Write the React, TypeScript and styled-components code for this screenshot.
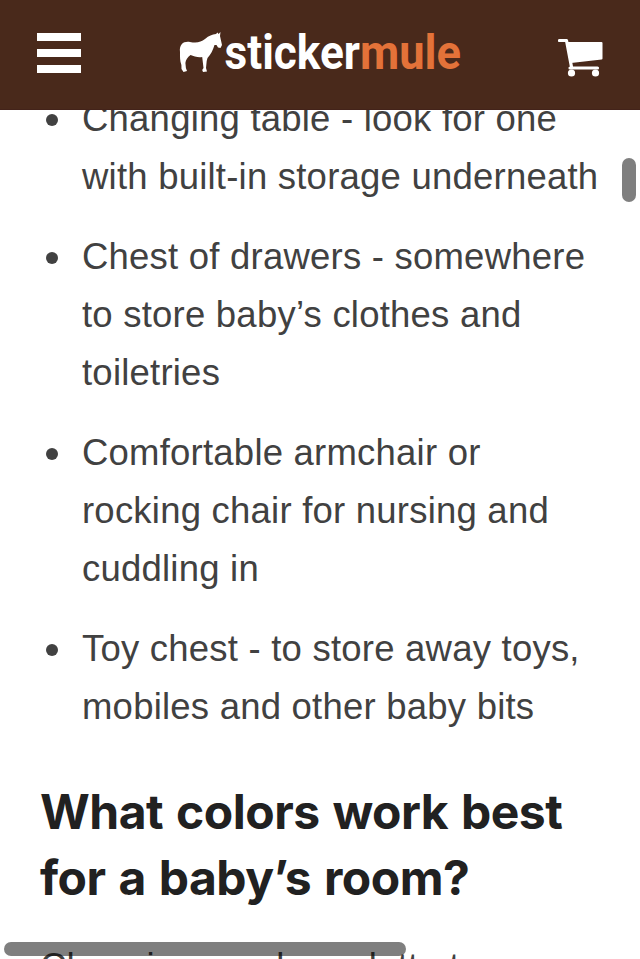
import React from "react";
import styled, { createGlobalStyle } from "styled-components";

const GlobalStyle = createGlobalStyle`
  html, body { margin: 0; height: 100%; overflow: hidden; background: #fff; }
`;

const Screen = styled.div`
  position: relative;
  display: flex;
  flex-direction: column;
  width: 640px;
  height: 959px;
  overflow: hidden;
  background: #fff;
`;

const Header = styled.header`
  display: flex;
  flex: none;
  align-items: center;
  justify-content: space-between;
  box-sizing: border-box;
  height: 110px;
  padding: 0 36px 0 37px;
  background: #49291b;
  box-shadow: inset 0 -1px #43231a;
`;

const MenuButton = styled.button`
  display: flex;
  flex-direction: column;
  justify-content: space-between;
  width: 44px;
  height: 40px;
  margin-bottom: 4px;
  padding: 0;
  border: 0;
  background: none;
`;

const MenuBar = styled.span`
  height: 8px;
  background: #fff;
`;

const Logo = styled.svg`
  width: 284px;
  height: 50px;
  margin: 0 0 4px;
  overflow: visible;
`;

const Wordmark = styled.text<{ $color: string }>`
  font: 700 48px Roboto, sans-serif;
  fill: ${(p) => p.$color};
`;

const CartIcon = styled.svg`
  width: 46px;
  height: 40px;
  margin-top: 5px;
`;

const Article = styled.main`
  flex: 1;
  min-height: 0;
  overflow: hidden;
  padding: 0 20px 0 40px;
  color: #414141;
  font: 36.5px/58px "Liberation Sans", Arial, sans-serif;
  letter-spacing: 0.22px;
`;

const List = styled.ul`
  display: flex;
  flex-direction: column;
  gap: 22px;
  margin: -20px 0 0;
  padding: 0;
  list-style: none;
`;

const Item = styled.li`
  display: flex;
`;

const Bullet = styled.span`
  flex: none;
  width: 12px;
  height: 12px;
  margin: 24px 24px 0 6px;
  border-radius: 50%;
  background: #414141;
`;

const Line = styled.span`
  display: block;
  white-space: nowrap;
`;

const Heading = styled.h2`
  margin: 43px 0 0;
  color: #212121;
  font: 700 48px/66px Inter, sans-serif;
  letter-spacing: -0.5px;
  word-spacing: 2px;
`;

const Paragraph = styled.p`
  margin: 27px 0 0;
  white-space: nowrap;
`;

const Scrollbar = styled.div<{ $axis: "x" | "y" }>`
  position: absolute;
  border-radius: 7px;
  background: rgba(0, 0, 0, 0.5);
  ${(p) =>
    p.$axis === "x"
      ? "left: 4px; bottom: 3px; width: 402px; height: 14px;"
      : "right: 4px; top: 158px; width: 14px; height: 44px;"}
`;

const items = [
  ["Changing table - look for one", "with built-in storage underneath"],
  ["Chest of drawers - somewhere", "to store baby’s clothes and", "toiletries"],
  ["Comfortable armchair or", "rocking chair for nursing and", "cuddling in"],
  ["Toy chest - to store away toys,", "mobiles and other baby bits"],
];

export default function App() {
  return (
    <>
      <GlobalStyle />
      <Screen>
        <Header>
          <MenuButton aria-label="Menu">
            <MenuBar />
            <MenuBar />
            <MenuBar />
          </MenuButton>
          <Logo viewBox="178 28 284 50" aria-label="stickermule">
            <path
              fill="#fff"
              d="M180 52C179 44 184 41 190 42C197 43.500 201 42 205 39C209 35.500 212 34.500 216 34L217.500 32.500L218.500 34L220.500 32L220 36L222 45L220.500 48L218 47.500L216.500 45L214.500 45C213 50 211 54 207.500 58L206.700 61L206 68L207 71.500L203 72L202.200 70L203.500 68L202.200 57C198 58 194 56 190.500 55C187.500 57 185.700 60 185.400 63L185.900 68L187 71L183.500 72L181.500 69L181.400 65C179.800 61 180 56 180 52Z"
            />
            <Wordmark $color="#fff" x="224.500" y="68.500" textLength="135.500" lengthAdjust="spacingAndGlyphs">sticker</Wordmark>
            <Wordmark $color="#e37239" x="360" y="68.500" textLength="101" lengthAdjust="spacingAndGlyphs">mule</Wordmark>
          </Logo>
          <CartIcon viewBox="558 38 46 40" aria-label="Cart">
            <path
              fill="none"
              stroke="#fff"
              strokeWidth="3.2"
              strokeLinecap="round"
              strokeLinejoin="round"
              d="M559.500 40.500H566.500L571.500 67M570 68H597.500"
            />
            <path
              fill="#fff"
              stroke="#fff"
              strokeWidth="2"
              strokeLinejoin="round"
              d="M568 43H601.500V58.500L571 62Z"
            />
            <circle cx="571.500" cy="73" r="3.600" fill="#fff" />
            <circle cx="595.500" cy="73" r="3.600" fill="#fff" />
          </CartIcon>
        </Header>
        <Article>
          <List>
            {items.map((lines) => (
              <Item key={lines[0]}>
                <Bullet />
                <div>
                  {lines.map((line) => (
                    <Line key={line}>{line}</Line>
                  ))}
                </div>
              </Item>
            ))}
          </List>
          <Heading>
            <Line>What colors work best</Line>
            <Line>for a baby’s room?</Line>
          </Heading>
          <Paragraph>Choosing a color palette to</Paragraph>
        </Article>
        <Scrollbar $axis="y" />
        <Scrollbar $axis="x" />
      </Screen>
    </>
  );
}
